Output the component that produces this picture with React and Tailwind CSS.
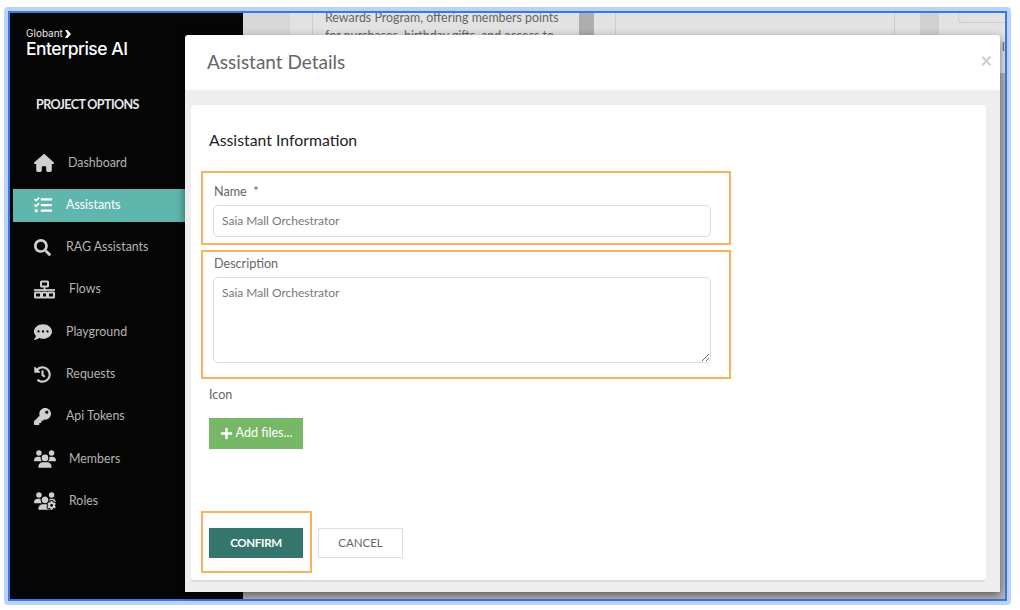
import React from 'react';
import { FaTasks, FaSearch, FaCommentDots, FaHistory, FaKey, FaPlus } from 'react-icons/fa';
import { FaHouse, FaUsers, FaUsersGear } from 'react-icons/fa6';

const FlowsIcon = ({ size, className }) => (
  <svg width={size} height={size} viewBox="0 0 21 18" className={className} fill="none" stroke="currentColor">
    <rect x="7" y="1" width="7" height="5" rx="0.5" strokeWidth="2" />
    <path d="M0 9.5h21" strokeWidth="1.8" />
    <path d="M10.5 6v4" strokeWidth="1.8" />
    <rect x="1" y="12" width="6" height="5" rx="0.5" strokeWidth="2" />
    <rect x="8" y="12" width="5" height="5" rx="0.5" strokeWidth="2" />
    <rect x="14" y="12" width="6" height="5" rx="0.5" strokeWidth="2" />
  </svg>
);

const navItems = [
  { label: 'Dashboard', icon: FaHouse, size: 20, gap: 'w-[55px]' },
  { label: 'Assistants', icon: FaTasks, size: 18, gap: 'w-[53px]', active: true },
  { label: 'RAG Assistants', icon: FaSearch, size: 17, gap: 'w-[53px]' },
  { label: 'Flows', icon: FlowsIcon, size: 21, gap: 'w-[56px]' },
  { label: 'Playground', icon: FaCommentDots, size: 18, gap: 'w-[53px]' },
  { label: 'Requests', icon: FaHistory, size: 17, gap: 'w-[53px]' },
  { label: 'Api Tokens', icon: FaKey, size: 17, gap: 'w-[53px]' },
  { label: 'Members', icon: FaUsers, size: 22, gap: 'w-[56px]' },
  { label: 'Roles', icon: FaUsersGear, size: 22, gap: 'w-[56px]' },
];

const Sidebar = () => (
  <aside className="w-[233px] shrink-0 bg-[#050505] pl-[3px]">
    <div className="pl-[13px] pt-[14px] text-white font-['Inter',sans-serif]">
      <div className="flex items-center gap-[2px] text-[10px] leading-[13px] text-[#e8e8e8]">
        Globant
        <svg width="6" height="8" viewBox="0 0 6 8" className="text-white">
          <path d="M0 0h2.4L6 4 2.4 8H0l2.6-4z" fill="currentColor" />
        </svg>
      </div>
      <div className="-mt-[1px] text-[17.5px] leading-[20px] font-medium tracking-[-0.5px]">Enterprise AI</div>
    </div>
    <div className="pl-[23px] pt-[37px] text-[12.5px] leading-[18px] font-bold text-[#e8e8e8] tracking-[-0.6px]">PROJECT OPTIONS</div>
    <nav className="mt-[32.4px] flex flex-col gap-[9.3px]">
      {navItems.map((item) => {
        const Icon = item.icon;
        return (
          <div
            key={item.label}
            className={`flex items-center h-[33px] text-[12.4px] ${item.active ? 'bg-[#5fb6ad] text-white' : 'text-[#b4b4b4]'}`}
          >
            <div className={`${item.gap} shrink-0 pl-[21px]`}>
              <Icon size={item.size} className={item.active ? 'text-white' : 'text-[#cfcfcf]'} />
            </div>
            <span>{item.label}</span>
          </div>
        );
      })}
    </nav>
  </aside>
);

// page behind the modal, only the top strip and the edges show
const Background = () => (
  <main className="flex-1 bg-[#b4b4b4] h-full overflow-hidden relative">
    <div className="flex h-[60px] bg-[#e2e2e2]">
      <div className="w-[47px] bg-[#d8d8d8] border-r border-[#d4d4d4]" />
      <div className="w-[23px] border-r border-[#cccccc]" />
      <div className="w-[266px] pl-[12px] pr-[16px] text-[12.4px] leading-[18px] text-[#666666] -mt-[4px]">
        Rewards Program, offering members points for purchases, birthday gifts, and access to
      </div>
      <div className="w-[15px] bg-[#aeaeae]" />
      <div className="w-[22px] border-r border-[#cccccc]" />
      <div className="w-[279px] border-r border-[#cccccc]" />
      <div className="w-[25px]" />
      <div className="w-[19px] bg-[#d0d0d0]" />
      <div className="flex-1 pl-[19px]">
        <div className="h-[10px] border-l border-b border-[#cccccc] rounded-bl-[4px]" />
        <div className="mt-[15px] pl-[44px] text-[12px] leading-[18px] text-[#555555]">l</div>
      </div>
    </div>
  </main>
);

const Highlight = ({ className, children }) => (
  <div className={`border-2 border-[#f4b35c] ${className}`}>{children}</div>
);

const Modal = () => (
  <div className="absolute left-[185px] top-[35px] w-[815px] h-[557px] bg-white rounded-[3px] flex flex-col shadow-[0_3px_9px_rgba(0,0,0,0.5)]">
    <div className="h-[55px] shrink-0 flex items-center justify-between pl-[22px] pr-[8px]">
      <h2 className="text-[19px] text-[#666666]">Assistant Details</h2>
      <span className="text-[20px] font-bold text-[#cccccc] -mt-[6px]">×</span>
    </div>
    <div className="flex-1 bg-[#eeeeee] pl-[6px] pr-[14px] pt-[15px] pb-[10px] flex">
      <div className="flex-1 bg-white rounded-[4px] border-b-2 border-[#dcdcdc] pl-[18px] pt-[24px] flex flex-col">
        <h3 className="text-[15.8px] leading-[22px] text-[#222222]">Assistant Information</h3>
        <Highlight className="-ml-[8px] mt-[20px] w-[530px] h-[74px] pl-[10px] pr-[18px] pt-[10px]">
          <label className="block pl-[1px] text-[12.6px] leading-[18px] text-[#666666]">Name&nbsp; *</label>
          <div className="mt-[4px] h-[32px] border border-[#dddddd] rounded-[5px] pl-[8px] flex items-center text-[12px] text-[#777777]">Saia Mall Orchestrator</div>
        </Highlight>
        <Highlight className="-ml-[8px] mt-[5px] w-[530px] h-[129px] pl-[10px] pr-[18px] pt-[3px]">
          <label className="block pl-[1px] text-[12.6px] leading-[18px] text-[#666666]">Description</label>
          <textarea
            readOnly
            defaultValue="Saia Mall Orchestrator"
            className="block mt-[4px] w-full h-[86px] border border-[#dddddd] rounded-[5px] pl-[8px] pt-[6px] text-[12px] text-[#777777] outline-none"
          />
        </Highlight>
        <div className="mt-[7px] text-[12.6px] leading-[18px] text-[#666666]">Icon</div>
        <button className="mt-[14px] w-[94px] h-[31px] bg-[#76b865] text-white text-[12.6px] flex items-center justify-center gap-[3px]">
          <FaPlus size={13} />
          Add files...
        </button>
        <div className="mt-[62px] flex items-start">
          <Highlight className="-ml-[8px] w-[111px] h-[62px] pl-[6px] pt-[15px]">
            <button className="w-[94px] h-[30px] bg-[#34766c] text-white text-[11.5px] tracking-[-0.3px] font-bold">CONFIRM</button>
          </Highlight>
          <button className="ml-[6px] mt-[17px] w-[85px] h-[30px] border border-[#dddddd] bg-white text-[11.5px] text-[#666666]">CANCEL</button>
        </div>
      </div>
    </div>
  </div>
);

export default function App() {
  return (
    <div className="w-[1020px] h-[610px] bg-white pl-[4px] pt-[7px] pr-[9px] pb-[5px] font-['Lato','Noto_Sans',sans-serif]">
      <div className="h-full border-[4px] border-[#bdd3f5] rounded-[4px]">
        <div className="h-full border-2 border-[#3b78e7] flex overflow-hidden">
          <Sidebar />
          <Background />
        </div>
      </div>
      <Modal />
    </div>
  );
}
